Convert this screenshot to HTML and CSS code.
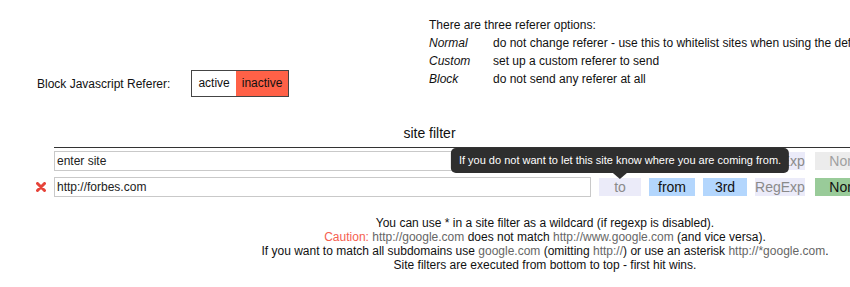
FILE: index.html
```html
<!DOCTYPE html>
<html lang="en">
<head>
    <meta charset="UTF-8">
    <title>Referer settings</title>
    <link rel="stylesheet" href="styles.css">
</head>
<body>

    <div class="top">
        <div class="js-setting">
            <span class="setting-label">Block Javascript Referer:</span>
            <div class="toggle">
                <span class="toggle-opt">active</span>
                <span class="toggle-opt on">inactive</span>
            </div>
        </div>
        <div class="info">
            <div class="info-title">There are three referer options:</div>
            <div class="info-key">Normal</div>
            <div>do not change referer - use this to whitelist sites when using the default block setting</div>
            <div class="info-key">Custom</div>
            <div>set up a custom referer to send</div>
            <div class="info-key">Block</div>
            <div>do not send any referer at all</div>
        </div>
    </div>

    <div class="filter">
        <div class="filter-head">
            <h2>site filter</h2>
        </div>

        <div class="filter-row">
            <span></span>
            <input class="site" type="text" value="enter site">
            <span class="btn off">to</span>
            <span class="btn off">from</span>
            <span class="btn off">3rd</span>
            <span class="btn off">RegExp</span>
            <span class="btn none">None</span>
        </div>

        <div class="filter-row">
            <svg class="del" width="10" height="10" viewBox="0 0 10 10">
                <path d="M1.5 1.5 L8.5 8.5 M8.5 1.5 L1.5 8.5" stroke="#e6443a" stroke-width="3" stroke-linecap="round"/>
            </svg>
            <input class="site" type="text" value="http://forbes.com">
            <span class="btn off tipped">to
                <span class="tooltip">If you do not want to let this site know where you are coming from.</span>
            </span>
            <span class="btn on">from</span>
            <span class="btn on">3rd</span>
            <span class="btn off">RegExp</span>
            <span class="btn none on-green">None</span>
        </div>
    </div>

    <div class="notes">
        <p>You can use * in a site filter as a wildcard (if regexp is disabled).</p>
        <p><span class="caution">Caution:</span> <span class="url">http://google.com</span> does not match <span class="url">http://www.google.com</span> (and vice versa).</p>
        <p>If you want to match all subdomains use <span class="url">google.com</span> (omitting <span class="url">http://</span>) or use an asterisk <span class="url">http://*google.com</span>.</p>
        <p>Site filters are executed from bottom to top - first hit wins.</p>
    </div>

</body>
</html>
```

FILE: styles.css
```css
* {
    margin: 0px;
    padding: 0px;
    box-sizing: border-box;
}

html, body {
    background-color: #fff;
    color: #111;
    font-family: "Liberation Sans", Arial, Helvetica, sans-serif;
    font-size: 12px;
    overflow: hidden;
}

.top{
    display: flex;
    align-items: flex-start;
}

.js-setting{
    width: 429px;
    flex: none;
    padding: 70px 0 0 37px;
    display: flex;
    align-items: center;
}

.setting-label{
    margin-right: 21px;
}

.toggle{
    display: flex;
    border: 1px solid #444;
}

.toggle-opt{
    padding: 0 6px;
    line-height: 25px;
}

.toggle-opt.on{
    background-color: #ff6147;
}

.info{
    padding-top: 16px;
    display: grid;
    grid-template-columns: 64px auto;
    line-height: 18px;
    white-space: nowrap;
}

.info-title{
    grid-column: 1 / -1;
}

.info-key{
    font-style: italic;
}

.filter{
    margin-top: 28px;
    padding-left: 36px;
}

.filter-head,
.filter-row{
    display: grid;
    grid-template-columns: 10px 537px 42px 46px 44px 50px 64px;
    column-gap: 8px;
    align-items: center;
}

.filter-head h2{
    grid-column: 2 / -1;
    font-size: 14px;
    font-weight: normal;
    line-height: 17px;
    text-align: center;
    padding: 0 72px 5px 0;
    border-bottom: 1px solid #333;
}

.filter-row{
    height: 20px;
    margin-top: 3px;
}

.filter-row + .filter-row{
    margin-top: 6px;
}

.del{
    display: block;
}

.site{
    height: 20px;
    border: 1px solid #c9c9c9;
    padding: 0 2px;
    font-family: inherit;
    font-size: 12px;
    color: #222;
    outline: none;
}

.btn{
    height: 18px;
    line-height: 18px;
    font-size: 14px;
    text-align: center;
    white-space: nowrap;
    overflow: visible;
}

.btn.off{
    background-color: #ebebf9;
    color: #8a8a8a;
}

.btn.on{
    background-color: #b3d6fd;
    color: #111;
}

.btn.none{
    margin-left: 2px;
    background-color: #ececec;
    color: #a0a0a0;
}

.btn.none.on-green{
    background-color: #99cb99;
    color: #111;
}

.tipped{
    position: relative;
}

.tooltip{
    position: absolute;
    left: 50%;
    bottom: 23px;
    transform: translateX(-50%);
    height: 25px;
    line-height: 25px;
    padding: 0 8px;
    border-radius: 5px;
    background-color: #2e2e2e;
    color: #fff;
    font-size: 11px;
    white-space: nowrap;
}

.tooltip::after{
    content: "";
    position: absolute;
    left: 50%;
    top: 25px;
    margin-left: -7px;
    border-left: 7px solid transparent;
    border-right: 7px solid transparent;
    border-top: 6px solid #2e2e2e;
}

.notes{
    margin: 19px 0 0 240px;
    width: 610px;
    text-align: center;
    line-height: 14px;
    white-space: nowrap;
}

.caution{
    color: #f56050;
}

.url{
    color: #666;
}
```
